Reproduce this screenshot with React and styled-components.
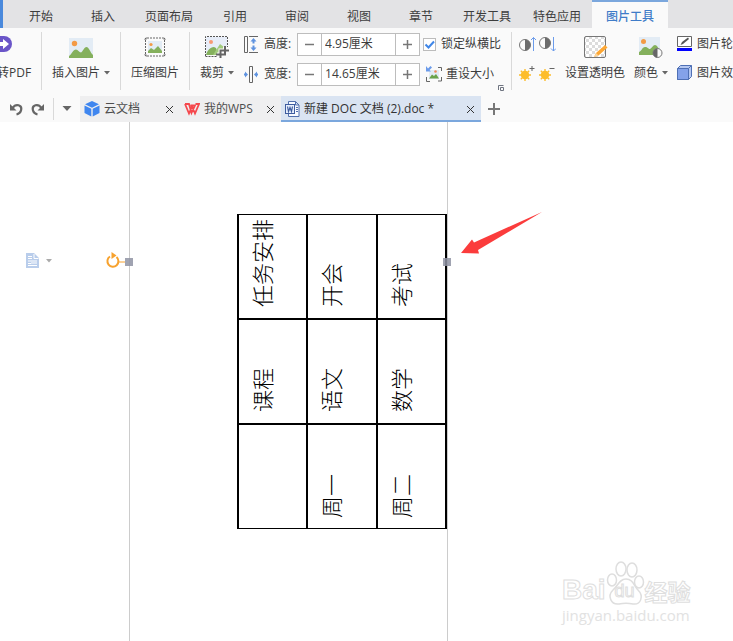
import React, { useState } from 'react';
import styled, { createGlobalStyle } from 'styled-components';

const GlobalStyle = createGlobalStyle`
    * {
        box-sizing: border-box;
    }
    body {
        margin: 0;
        background: #ffffff;
        color: #3d3d3d;
        font-family: 'Open Sans', 'Noto Sans CJK SC', sans-serif;
        font-size: 12px;
        line-height: 16px;
        overflow: hidden;
    }
    button, input {
        font: inherit;
        color: inherit;
    }
    button {
        border: 0;
        padding: 0;
        background: none;
        white-space: nowrap;
        cursor: pointer;
    }
    svg {
        display: block;
        flex: none;
    }
`
const Window = styled.div`
    position: relative;
    display: flex;
    flex-direction: column;
    min-height: 100vh;
    overflow: hidden;
`
const MenuBar = styled.nav`
    display: flex;
    height: 28px;
    padding-left: 7px;
    background: #e3e3e5;
    border-left: 3px solid #4a89dc;
`
const MenuTab = styled.button`
    flex: none;
    min-width: 62px;
    padding: ${props => props.$active ? '4px 14px 0' : '6px 11px 0'};
    color: ${props => props.$active ? '#3f7cc8' : '#3d3d3d'};
    background: ${props => props.$active ? '#fafafa' : 'transparent'};
    border-top: ${props => props.$active ? '2px solid #7ba7dd' : '0'};
    font-weight: ${props => props.$active ? 500 : 400};
`
const Ribbon = styled.div`
    display: flex;
    height: 68px;
    padding-top: 4px;
    background: #fafafa;
`
const Group = styled.div`
    position: relative;
    flex: none;
    display: flex;
    height: 58px;
    padding: 0 ${props => props.$pad || 0}px;
    border-right: ${props => props.$last ? '0' : '1px solid #d9d9d9'};
`
const BigButton = styled.button`
    display: flex;
    flex-direction: column;
    align-items: center;
    gap: 7px;
    padding-top: 4px;
`
const Caption = styled.span`
    display: flex;
    align-items: center;
    gap: 4px;
`
const ConvertButton = styled(BigButton)`
    align-items: flex-start;
    width: 41px;
    overflow: hidden;
    span {
        margin-left: -3px;
    }
`
const SizeRows = styled.div`
    display: flex;
    flex-direction: column;
    gap: 6px;
    margin-left: 10px;
`
const SizeRow = styled.div`
    display: flex;
    align-items: center;
    height: 24px;
    label {
        width: 33px;
        margin-left: 6px;
        white-space: nowrap;
    }
`
const Stepper = styled.div`
    display: flex;
    width: 123px;
    height: 23px;
    background: #ffffff;
    border: 1px solid #bdbdbd;
    button {
        display: flex;
        align-items: center;
        justify-content: center;
        width: 23px;
    }
    input {
        flex: 1;
        min-width: 0;
        padding: 0 0 0 3px;
        border: 0;
        border-left: 1px solid #bdbdbd;
        border-right: 1px solid #bdbdbd;
        outline: 0;
    }
`
const OptionRows = styled.div`
    display: flex;
    flex-direction: column;
    gap: 6px;
    margin-left: 3px;
`
const CheckLabel = styled.label`
    display: flex;
    align-items: center;
    gap: 5px;
    height: 24px;
    white-space: nowrap;
`
const CheckBox = styled.span`
    position: relative;
    width: 13px;
    height: 13px;
    background: #ffffff;
    border: 1px solid #bcbcbc;
    input {
        position: absolute;
        inset: 0;
        margin: 0;
        opacity: 0;
    }
    svg {
        visibility: ${props => props.$checked ? 'visible' : 'hidden'};
    }
`
const SmallButton = styled.button`
    display: flex;
    align-items: center;
    gap: 4px;
    height: 24px;
    margin-left: ${props => props.$indent || 0}px;
`
const Launcher = styled.button`
    position: absolute;
    right: 7px;
    bottom: -1px;
`
const IconGrid = styled.div`
    display: grid;
    grid-template-columns: 17px 17px;
    grid-template-rows: 24px 24px;
    gap: 6px 3px;
    margin-right: 9px;
    button {
        display: flex;
        align-items: center;
    }
`
const SideButtons = styled.div`
    display: flex;
    flex-direction: column;
    gap: 5px;
`
const TabStrip = styled.div`
    display: flex;
    align-items: stretch;
    height: 26px;
    background: #fafafa;
`
const QuickTools = styled.div`
    flex: none;
    display: flex;
    align-items: center;
    width: 80px;
    padding-left: 9px;
    gap: 8px;
`
const QuickDivider = styled.div`
    width: 1px;
    height: 22px;
    background: #d9d9d9;
`
const DocTab = styled.div`
    flex: 0 0 ${props => props.$width}px;
    display: flex;
    align-items: center;
    gap: 4px;
    padding: 2px 6px 0 4px;
    color: ${props => props.$active ? '#333333' : '#4d4d4d'};
    background: ${props => props.$active ? '#dae4f2' : '#efeff0'};
    border-bottom: 2px solid ${props => props.$active ? '#7ba7dd' : '#efeff0'};
    span {
        flex: 1;
        white-space: nowrap;
    }
`
const AddTab = styled.button`
    padding: 0 7px;
`
const Workspace = styled.main`
    flex: 1;
    display: grid;
    grid-template-columns: 129fr 319fr 285fr;
`
const Gutter = styled.div`
    display: flex;
    justify-content: flex-start;
    align-items: flex-start;
    padding: 131px 0 0 26px;
    button {
        display: flex;
        align-items: center;
        gap: 7px;
    }
`
const Page = styled.section`
    position: relative;
    padding-top: 92px;
    border-left: 1px solid #cccccc;
    border-right: 1px solid #cccccc;
`
const Schedule = styled.table`
    width: 210px;
    margin-left: auto;
    border-collapse: collapse;
    table-layout: fixed;
    color: #000000;
    td {
        height: 105px;
        padding: 0 0 10px 6px;
        border: 2px solid #000000;
        vertical-align: bottom;
    }
    tr:first-child td {
        height: 104px;
        border-top-width: 1px;
    }
    tr:last-child td {
        border-bottom-width: 1px;
    }
`
const SidewaysText = styled.span`
    display: block;
    width: 32px;
    writing-mode: vertical-rl;
    text-orientation: sideways;
    transform: rotate(180deg);
    font-family: 'Noto Sans CJK SC', sans-serif;
    font-size: 22px;
    font-weight: 300;
    line-height: 32px;
    white-space: nowrap;
`
const Handle = styled.i`
    position: absolute;
    top: 136px;
    ${props => props.$side}: ${props => props.$side === 'left' ? -5 : -4}px;
    width: 8px;
    height: 8px;
    background: rgba(143, 147, 163, 0.85);
`
const RotateHandle = styled.div`
    position: absolute;
    top: 130px;
    left: -25px;
`
const Pointer = styled.div`
    padding: 90px 0 0 13px;
`
const Watermark = styled.div`
    position: absolute;
    right: 39px;
    bottom: 17px;
    width: 132px;
    color: #ffffff;
    -webkit-text-stroke: 1px #dedede;
`
const Brand = styled.div`
    display: flex;
    align-items: flex-end;
    height: 46px;
    font: bold 28px/32px 'Liberation Sans', sans-serif;
    b {
        font: bold 23px/30px 'Noto Sans CJK SC', sans-serif;
    }
`
const Paw = styled.span`
    position: relative;
    width: 39px;
    height: 46px;
    svg {
        position: absolute;
        left: 0;
        top: 0;
    }
    span {
        position: absolute;
        left: 9px;
        bottom: 5px;
        font-size: 18px;
        line-height: 20px;
        font-weight: 400;
    }
`
const Site = styled.div`
    font: 15px/18px 'Open Sans', sans-serif;
    -webkit-text-stroke: 0;
    color: #e2e2e2;
    white-space: nowrap;
`

const Caret = ({ size = 6, color = '#666666' }) => (
    <svg width={size} height={size / 2 + 1} viewBox="0 0 6 4"><path d="M0 0h6L3 3.4z" fill={color} /></svg>
)

const ConvertIcon = () => (
    <svg width="13" height="22" viewBox="0 0 13 22">
        <path d="M-6 0H4a8 8 0 0 1 0 16H-6z" fill="#6a55c8" />
        <path d="M-2 6h5V3l6 5-6 5v-3h-5z" fill="#ffffff" />
    </svg>
)

const PictureIcon = () => (
    <svg width="24" height="22" viewBox="0 0 24 22">
        <rect y="2" width="24" height="20" fill="#e3ecf5" />
        <circle cx="5.5" cy="7.5" r="2.7" fill="#f39a45" />
        <path d="M0 22v-2c3-2 4-6.500 7-6.500 2 0 3 3 5 3 2-1 3-5.500 5.500-5.500s4 6 6.500 8v3z" fill="#84b05c" />
    </svg>
)

const CompressIcon = () => (
    <svg width="24" height="22" viewBox="0 0 24 22">
        <rect x="5" y="5" width="14" height="12" fill="#e3ecf5" />
        <circle cx="8" cy="8.500" r="1.600" fill="#f39a45" />
        <path d="M5 17v-2l3-3 3 2 4-4 4 5v2z" fill="#84b05c" />
        <path d="M4 2h16M4 20h16M2.500 4v14M21.500 4v14" stroke="#666666" strokeDasharray="2 1" fill="none" />
        <path d="M1 3.500l2.500-2.500v2.500zM23 3.500L20.500 1v2.500zM1 18.500L3.500 21v-2.500zM23 18.500L20.500 21v-2.500z" fill="#555555" />
    </svg>
)

const CropIcon = () => (
    <svg width="24" height="22" viewBox="0 0 24 22">
        <rect x="1" y="1" width="21" height="18" fill="#e7edf8" />
        <circle cx="6" cy="6" r="2" fill="#f79a75" />
        <path d="M1 19c1-4 4-8 8-8l2 1 3 7z" fill="#84b05c" />
        <path d="M8 19l7-11 4 3v5l-4 3z" fill="#a2cb7d" />
        <path d="M.5 20V.5h22V11M.5 20.500H12" stroke="#555555" strokeDasharray="2 1" fill="none" />
        <path d="M12 18.500h8v-8M15.500 22v-7.500H24" fill="none" stroke="#fafafa" strokeWidth="4" />
        <path d="M11 18.500h9V10M15.500 22v-7.500H24" fill="none" stroke="#666666" strokeWidth="2" />
    </svg>
)

const HeightIcon = () => (
    <svg width="14" height="17" viewBox="0 0 14 17">
        <path d="M.5.500h3v16h-3zM5 .500h9M5 16.500h9" fill="none" stroke="#666666" />
        <path d="M9.500 2l3 3.500H10.500v2h-2v-2h-2zM9.500 15l3-3.500H10.500v-2h-2v2h-2z" fill="#5f93e0" />
    </svg>
)

const WidthIcon = () => (
    <svg width="14" height="17" viewBox="1 0 14 17">
        <path d="M6.500.500h3v16h-3z" fill="none" stroke="#666666" />
        <path d="M5 8.500l-3-3v2H0v2h2v2zM11 8.500l3-3v2h2v2h-2v2z" fill="#5f93e0" />
    </svg>
)

const MinusIcon = () => (
    <svg width="9" height="9" viewBox="0 0 9 9"><path d="M0 4.500h9" stroke="#777777" strokeWidth="1.500" /></svg>
)

const PlusIcon = ({ size = 9 }) => (
    <svg width={size} height={size} viewBox="0 0 9 9"><path d="M0 4.500h9M4.500 0v9" stroke="#777777" strokeWidth="1.500" /></svg>
)

const ResetIcon = () => (
    <svg width="16" height="16" viewBox="0 0 16 16">
        <rect x="3" y="4" width="10" height="9" fill="#e3ecf5" />
        <path d="M3 12.500l3-4 2 1.500 2-2 3 4.500z" fill="#6ba34a" />
        <circle cx="9.500" cy="5.500" r="1.300" fill="#f08a5a" />
        <path d="M12 1.500h3.500V5M15.500 11v4H12M4 15.500H.500V11" fill="none" stroke="#666666" />
        <path d="M0 0v5.500h5L3.500 4 6 1.500 4.500 0 2 2.500z" fill="#6b9bea" />
    </svg>
)

const ContrastIcon = ({ down }) => (
    <svg width="17" height="17" viewBox="0 0 17 17">
        <circle cx="6" cy={down ? 7 : 9} r="5.500" fill="#fafafa" stroke="#777777" />
        <path d={down ? 'M6 1.500a5.500 5.500 0 0 1 0 11z' : 'M6 3.500a5.500 5.500 0 0 1 0 11z'} fill="#6b6b6b" />
        <path
            d={down ? 'M14.500 1v14M12 12.500l2.500 2.500 2.500-2.500' : 'M14.500 15V1.500M12 4l2.500-2.500L17 4'}
            fill="none"
            stroke="#6b9bea"
        />
    </svg>
)

const SunIcon = ({ plus }) => (
    <svg width="17" height="17" viewBox="0 0 17 17">
        <path d="M6 3v12M0 9h12M1.800 4.800l8.400 8.400M10.200 4.800l-8.400 8.400" stroke="#fdbd2c" strokeWidth="1.400" />
        <circle cx="6" cy="9" r="4.200" fill="#fdbd2c" />
        <path d={plus ? 'M10.500 2.500h5M13 0v5' : 'M10.500 2.500h5'} stroke="#666666" />
    </svg>
)

const TransparentIcon = () => (
    <svg width="25" height="22" viewBox="0 0 25 22">
        <defs>
            <pattern id="checks" width="6" height="6" patternUnits="userSpaceOnUse">
                <rect width="6" height="6" fill="#ffffff" />
                <path d="M0 0h3v3H0zM3 3h3v3H3z" fill="#dcdcdc" />
            </pattern>
        </defs>
        <rect x="1.500" y=".5" width="21" height="21" rx="1.500" fill="url(#checks)" stroke="#777777" />
        <path d="M11 21l2-4 9-8 2.500 2.500-9 8z" fill="#fda734" />
        <path d="M11 21l2-4 2.500 2.500z" fill="#fbd59c" />
    </svg>
)

const ColorIcon = () => (
    <svg width="24" height="22" viewBox="0 0 24 22">
        <rect x="0" y="1" width="21" height="18" fill="#e3ecf5" />
        <circle cx="4.500" cy="5.500" r="2.500" fill="#f39a45" />
        <path d="M0 19v-3c3-1 3-5 6-5s3 2 5 2c2-1 3-4 5-4s3 3 5 5v5z" fill="#84b05c" />
        <circle cx="18.500" cy="17" r="4.500" fill="#fafafa" stroke="#777777" />
        <path d="M18.500 12.500a4.500 4.500 0 0 0 0 9z" fill="#666666" />
    </svg>
)

const OutlineIcon = () => (
    <svg width="16" height="16" viewBox="0 0 16 16">
        <path d="M.5.500h14v10H.500z" fill="#ffffff" stroke="#666666" />
        <path d="M3.500 9l1.500-3 6-4.500 1 1.500-6 5z" fill="#555555" />
        <rect y="12" width="15" height="3" fill="#0000ff" />
    </svg>
)

const EffectIcon = () => (
    <svg width="16" height="16" viewBox="0 0 16 16">
        <path d="M.5 3.500l3-3h11v11l-3 3H.500z" fill="#b4c7f1" stroke="#4f70b5" />
        <path d="M.5 3.500h11v11H.500z" fill="#84a2ea" stroke="#4f70b5" />
        <path d="M11.500 3.500l3-3" stroke="#4f70b5" />
    </svg>
)

const UndoIcon = ({ flip }) => (
    <svg width="14" height="14" viewBox="0 0 14 14">
        <g transform={flip ? 'translate(14 0) scale(-1 1)' : undefined}>
            <path d="M3.500 6C7 1 13.500 3 12 8.500c-.500 2-2.500 3.500-4.500 4" fill="none" stroke="#666666" strokeWidth="2.200" />
            <path d="M1 2v6.500h6.500z" fill="#666666" />
        </g>
    </svg>
)

const CubeIcon = () => (
    <svg width="16" height="16" viewBox="0 0 16 16">
        <path d="M8 0l7 3.200-7 3.500-7-3.500z" fill="#3f86ef" />
        <path d="M.500 4.500l6.800 3.300v7.800L.500 12z" fill="#3f86ef" />
        <path d="M15.500 4.500L8.700 7.800v7.800l6.800-3.600z" fill="#3f86ef" />
    </svg>
)

const WpsIcon = () => (
    <svg width="16" height="14" viewBox="0 0 16 14">
        <path d="M1 2h4l2.500 9L11 3.500H6.500M1 2l4 9.500 3-7 3 7L15 2h-3.500" fill="none" stroke="#f5484d" strokeWidth="1.800" />
    </svg>
)

const WordIcon = () => (
    <svg width="15" height="16" viewBox="0 0 15 16">
        <path d="M3.500 4V.500h7l3.500 3.500v11.500H3.500V13M10.500.500V4H14M11 6.500h2M11 8.500h2M11 10.500h2" fill="#f7faff" stroke="#5270ae" />
        <rect x=".5" y="3.500" width="9" height="9" fill="#e7effc" stroke="#3e5c9f" />
        <path d="M2.500 5.500l1 5 1.500-4 1.500 4 1-5" fill="none" stroke="#3e5c9f" strokeWidth="1.200" />
    </svg>
)

const CloseIcon = () => (
    <svg width="9" height="9" viewBox="0 0 9 9"><path d="M1 1l7 7M8 1L1 8" stroke="#333333" /></svg>
)

const NoteIcon = () => (
    <svg width="13" height="15" viewBox="0 0 13 15">
        <path d="M0 0h8l5 5v10H0z" fill="#b9cdeb" />
        <path d="M8 1v4.500h4.500M2 3.500h4M2 5.500h4M2 8h9M2 10.500h3M2 12.500h9M5 10h6" fill="none" stroke="#ffffff" />
    </svg>
)

const RotateIcon = () => (
    <svg width="22" height="18" viewBox="0 0 22 18">
        <path d="M5 4.500A5.500 5.500 0 1 0 11.500 5" fill="none" stroke="#f7a22e" strokeWidth="2" />
        <path d="M6.500 0l5 3.500-5 3.500z" fill="#f7a22e" />
        <path d="M14 10h6" stroke="#f7a22e" />
    </svg>
)

const menus = ['开始', '插入', '页面布局', '引用', '审阅', '视图', '章节', '开发工具', '特色应用', '图片工具']

const rows = [
    ['任务安排', '开会', '考试'],
    ['课程', '语文', '数学'],
    ['', '周一', '周二'],
]

const SizeField = ({ id, label, icon, start, step = 0.1 }) => {
    const [value, setValue] = useState(start + '厘米')
    const change = (by) => setValue((parseFloat(value) + by).toFixed(2) + '厘米')
    return (
        <SizeRow>
            {icon}
            <label htmlFor={id}>{label}:</label>
            <Stepper>
                <button aria-label={label + '减小'} onClick={() => change(-step)}><MinusIcon /></button>
                <input id={id} value={value} onChange={e => setValue(e.target.value)} />
                <button aria-label={label + '增大'} onClick={() => change(step)}><PlusIcon /></button>
            </Stepper>
        </SizeRow>
    )
}

const App = () => {
    const [menu, setMenu] = useState('图片工具')
    const [locked, setLocked] = useState(true)

    return (
        <Window>
            <GlobalStyle />
            <MenuBar>
                {menus.map(name => (
                    <MenuTab key={name} $active={name === menu} onClick={() => setMenu(name)}>{name}</MenuTab>
                ))}
            </MenuBar>
            <Ribbon>
                <Group>
                    <ConvertButton><ConvertIcon /><span>转PDF</span></ConvertButton>
                </Group>
                <Group $pad={10}>
                    <BigButton><PictureIcon /><Caption>插入图片<Caret /></Caption></BigButton>
                </Group>
                <Group $pad={10}>
                    <BigButton><CompressIcon />压缩图片</BigButton>
                </Group>
                <Group $pad={10}>
                    <BigButton><CropIcon /><Caption>裁剪<Caret /></Caption></BigButton>
                    <SizeRows>
                        <SizeField id="height" label="高度" start={4.95} icon={<HeightIcon />} />
                        <SizeField id="width" label="宽度" start={14.65} icon={<WidthIcon />} />
                    </SizeRows>
                    <OptionRows>
                        <CheckLabel>
                            <CheckBox $checked={locked}>
                                <input type="checkbox" checked={locked} onChange={e => setLocked(e.target.checked)} />
                                <svg width="11" height="11" viewBox="0 0 11 11">
                                    <path d="M1.500 5.500l3 3L10 2.500" fill="none" stroke="#3f86e8" strokeWidth="2" />
                                </svg>
                            </CheckBox>
                            锁定纵横比
                        </CheckLabel>
                        <SmallButton $indent={3}><ResetIcon />重设大小</SmallButton>
                    </OptionRows>
                    <Launcher aria-label="大小设置">
                        <svg width="6" height="6" viewBox="0 0 6 6">
                            <path d="M.500 5V.500H5.500M2.500 5.500h3v-3h-3z" fill="none" stroke="#6f7480" />
                        </svg>
                    </Launcher>
                </Group>
                <Group $pad={7} $last>
                    <IconGrid>
                        <button aria-label="增加对比度"><ContrastIcon /></button>
                        <button aria-label="降低对比度"><ContrastIcon down /></button>
                        <button aria-label="增加亮度"><SunIcon plus /></button>
                        <button aria-label="降低亮度"><SunIcon /></button>
                    </IconGrid>
                    <BigButton><TransparentIcon />设置透明色</BigButton>
                    <Group $pad={9} $last>
                        <BigButton><ColorIcon /><Caption>颜色<Caret /></Caption></BigButton>
                    </Group>
                    <SideButtons>
                        <SmallButton><OutlineIcon />图片轮廓</SmallButton>
                        <SmallButton><EffectIcon />图片效果</SmallButton>
                    </SideButtons>
                </Group>
            </Ribbon>
            <TabStrip>
                <QuickTools>
                    <button aria-label="撤销"><UndoIcon /></button>
                    <button aria-label="恢复"><UndoIcon flip /></button>
                    <QuickDivider />
                    <button aria-label="更多"><Caret size={10} /></button>
                </QuickTools>
                <DocTab $width={100}>
                    <CubeIcon /><span>云文档</span>
                    <button aria-label="关闭"><CloseIcon /></button>
                </DocTab>
                <DocTab $width={101}>
                    <WpsIcon /><span>我的WPS</span>
                    <button aria-label="关闭"><CloseIcon /></button>
                </DocTab>
                <DocTab $width={200} $active>
                    <WordIcon /><span>新建 DOC 文档 (2).doc *</span>
                    <button aria-label="关闭"><CloseIcon /></button>
                </DocTab>
                <AddTab aria-label="新建标签"><PlusIcon size={12} /></AddTab>
            </TabStrip>
            <Workspace>
                <Gutter>
                    <button aria-label="段落"><NoteIcon /><Caret color="#aaaaaa" /></button>
                </Gutter>
                <Page>
                    <Schedule>
                        <tbody>
                            {rows.map((row, i) => (
                                <tr key={i}>
                                    {row.map((text, j) => (
                                        <td key={j}>{text && <SidewaysText>{text}</SidewaysText>}</td>
                                    ))}
                                </tr>
                            ))}
                        </tbody>
                    </Schedule>
                    <RotateHandle><RotateIcon /></RotateHandle>
                    <Handle $side="left" />
                    <Handle $side="right" />
                </Page>
                <Pointer>
                    <svg width="84" height="44" viewBox="0 0 84 44">
                        <path d="M0 41L11 27.500l2 3L81 0 17 38l1 3.500z" fill="#fb3c3c" />
                    </svg>
                </Pointer>
            </Workspace>
            <Watermark>
                <Brand>
                    Bai
                    <Paw>
                        <svg width="39" height="46" viewBox="0 0 39 46" fill="#ffffff" stroke="#dedede" strokeWidth="1.500">
                            <ellipse cx="6" cy="20" rx="4.500" ry="6" />
                            <ellipse cx="15" cy="9" rx="5" ry="7" />
                            <ellipse cx="26" cy="10" rx="5" ry="7" />
                            <ellipse cx="33" cy="22" rx="4.500" ry="6" />
                            <path d="M20 19c7 0 8 7 12 11 6 6 3 15-5 14-5-1-9-1-14 0-8 1-12-8-6-14 5-4 6-11 13-11z" />
                        </svg>
                        <span>du</span>
                    </Paw>
                    <b>经验</b>
                </Brand>
                <Site>jingyan.baidu.com</Site>
            </Watermark>
        </Window>
    )
}

export default App;
